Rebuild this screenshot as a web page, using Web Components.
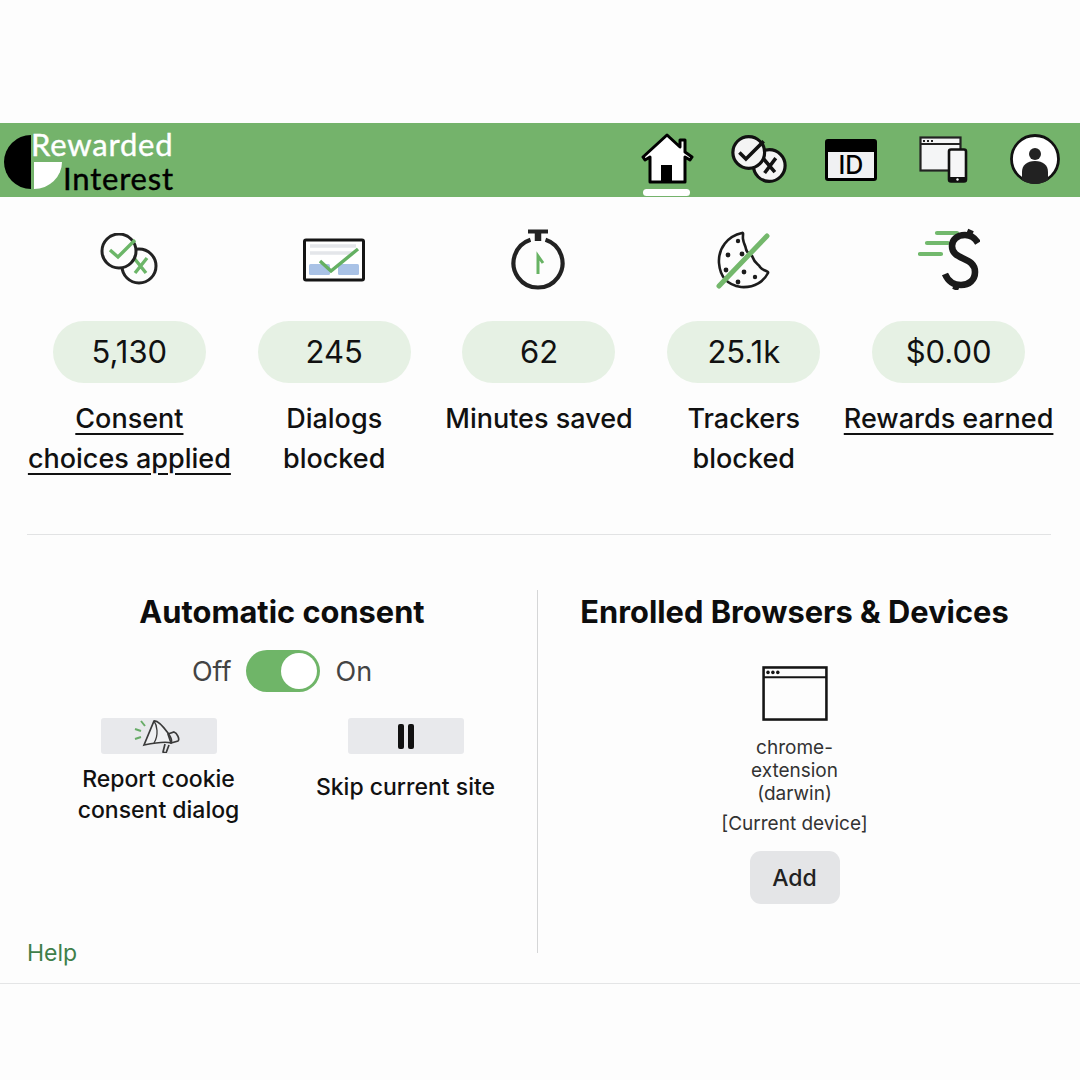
<!DOCTYPE html>
<html lang="en">
<head>
<meta charset="utf-8">
<title>Rewarded Interest</title>
<style>
  html, body { margin: 0; background: #fdfdfd; }
  body { font-family: Inter, "Liberation Sans", sans-serif; color: #111; }
</style>
</head>
<body>
<ri-app></ri-app>

<script>
const ICONS = {
  home: `<svg width="54" height="54" viewBox="0 0 54 54"><path d="M3 25 27 3l13 12V8h5v12l7 5-2 3-5-3v25H10V25l-5 3z" fill="#fff" stroke="#000" stroke-width="3" stroke-linejoin="round"/><rect x="21" y="33" width="11" height="18" fill="#000"/></svg>`,
  consent: `<svg width="60" height="52" viewBox="0 0 60 52"><circle cx="41" cy="33" r="17" fill="#f4f4f4" stroke="#111" stroke-width="3.400"/><path d="M35 26l12 14M48 25 36 41" stroke="#111" stroke-width="3.800" fill="none"/><circle cx="19" cy="19" r="17" fill="#f4f4f4" stroke="#111" stroke-width="3.400"/><path d="M9 19l7 7L35 7" stroke="#111" stroke-width="3.800" fill="none"/></svg>`,
  id: `<svg width="52" height="42" viewBox="0 0 52 42"><rect x="1.500" y="1.500" width="49" height="39" rx="1.500" fill="#f0f1f3" stroke="#000" stroke-width="3"/><rect x="1" y="1" width="50" height="12" fill="#000"/><text x="26" y="35" text-anchor="middle" font-family="Inter, sans-serif" font-size="25" font-weight="500" fill="#000">ID</text></svg>`,
  devices: `<svg width="50" height="48" viewBox="-1 0 50 48"><rect x="1.500" y="1.500" width="40" height="33" fill="#f4f5f6" stroke="#222" stroke-width="2.200"/><path d="M1.500 8h40" stroke="#222" stroke-width="2"/><path d="M4 5h2M8 5h2M12 5h2" stroke="#222" stroke-width="2"/><rect x="30" y="13.500" width="17" height="32" rx="2" fill="#f6f6f7" stroke="#111" stroke-width="2.600"/><rect x="30" y="41" width="17" height="5" fill="#111"/><circle cx="38.500" cy="43.500" r="1.200" fill="#fff"/></svg>`,
  profile: `<svg width="50" height="50" viewBox="0 0 50 50"><circle cx="25" cy="25" r="23.500" fill="#fff" stroke="#111" stroke-width="2.800"/><circle cx="25" cy="20" r="6" fill="#222"/><path d="M12 46V38c0-7 5-11 13-11s13 4 13 11v8a23 23 0 0 1-26 0z" fill="#222"/></svg>`,
  statConsent: `<svg width="60" height="54" viewBox="-2 0 60 54"><circle cx="38" cy="33" r="17" fill="#fdfdfd" stroke="#222" stroke-width="3"/><path d="M33 25l12 15M46 25 34 40" stroke="#6cb668" stroke-width="3.400" fill="none"/><circle cx="18" cy="18" r="17" fill="#fdfdfd" stroke="#222" stroke-width="3"/><path d="M9 17l8 7L34 7" stroke="#6cb668" stroke-width="3.400" fill="none"/></svg>`,
  dialog: `<svg width="62" height="44" viewBox="0 0 62 44"><rect x="1.500" y="2" width="59" height="40" rx="1.500" fill="#fff" stroke="#151515" stroke-width="3"/><path d="M7 8h46M7 15h42" stroke="#e4e6ea" stroke-width="3.500"/><rect x="6" y="26" width="21" height="11" rx="1.500" fill="#a9c2e6"/><rect x="35" y="26" width="21" height="11" rx="1.500" fill="#a9c2e6"/><path d="M17 23l11 10L55 11" stroke="#64b062" stroke-width="3.400" fill="none"/></svg>`,
  timer: `<svg width="56" height="62" viewBox="1 0 56 62"><path d="M18 2.500h20" stroke="#222" stroke-width="4"/><path d="M28 3v9" stroke="#222" stroke-width="6.500"/><path d="M20.500 10.700a24.500 24.500 0 1 0 15 0" fill="none" stroke="#222" stroke-width="4.200"/><path d="M28 45V27l5 7" fill="none" stroke="#68b364" stroke-width="3"/></svg>`,
  cookie: `<svg width="58" height="60" viewBox="0 0 58 60"><path d="M27 3c-14 3-24 15-23 30 1 13 8 22 22 24 14 1 23-6 27-14 1-2-5-2-8-6-1-3-5-3-7-9-1-5-6-3-7-9-1-5-2-4-3-10-.500-3 1-7-1-6z" fill="#fdfdfd" stroke="#1c1c1c" stroke-width="2.600"/><g fill="#1c1c1c"><circle cx="23" cy="11" r="2.200"/><circle cx="13" cy="25" r="2.400"/><circle cx="27" cy="24" r="2.400"/><circle cx="11" cy="40" r="2.400"/><circle cx="29" cy="42" r="2.400"/><circle cx="40" cy="47" r="2.200"/><circle cx="23" cy="52" r="2.400"/></g><path d="M4 56 52 6" stroke="#74b86c" stroke-width="5" stroke-linecap="round"/></svg>`,
  dollar: `<svg width="62" height="62" viewBox="0 0 62 62"><path d="M19 5h20M9 15h21M2 26h21" stroke="#72b96d" stroke-width="4.200" stroke-linecap="round"/><path d="M60 15c-3-5-8-8-13-8-8 0-13 5-13 11 0 15 23 10 23 26 0 8-6 13-14 13-7 0-13-4-16-11" fill="none" stroke="#1a1a1a" stroke-width="6.600"/><path d="M53 2l-3 7M40 55l-3 7" stroke="#1a1a1a" stroke-width="6"/></svg>`,
  megaphone: `<svg width="50" height="34" viewBox="0 0 50 34"><path d="M10 26 20 2c4-1 11 8 14 12 2 3 5 7 3 10-6-2-17 0-27 2z" fill="#eff0f2" stroke="#3a3a3a" stroke-width="1.700"/><path d="M20 2c3 4 5 14 0 22" fill="none" stroke="#3a3a3a" stroke-width="1.300"/><path d="M34 15l6-2c3 1 6 7 4 9l-7 2zM31 25l-2 8 3 1 3-8" fill="none" stroke="#3a3a3a" stroke-width="1.700"/><path d="M7 2l4 5M1 10l6 2M1 20l6-2" stroke="#68ac68" stroke-width="2"/></svg>`,
  browser: `<svg width="66" height="55" viewBox="0 0 67 56"><rect x="1.500" y="1.500" width="64" height="53" fill="#fdfdfd" stroke="#151515" stroke-width="2.600"/><path d="M1.500 11.500h64" stroke="#151515" stroke-width="2"/><g fill="#151515"><circle cx="6" cy="6.500" r="1.800"/><circle cx="11" cy="6.500" r="1.800"/><circle cx="16" cy="6.500" r="1.800"/></g></svg>`
};

// small helper so each component just declares its css and markup
class Base extends HTMLElement {
  render(css, html) {
    const root = this.attachShadow({ mode: "open" });
    root.innerHTML = `<style>${css}</style>${html}`;
  }
}

class RiLogo extends Base {
  connectedCallback() {
    this.render(`
      :host { display: block; position: relative; width: 180px; height: 74px; font-family: Lato, sans-serif; font-size: 31px; line-height: 1; letter-spacing: .8px; -webkit-text-stroke: .4px currentColor; }
      svg { position: absolute; left: 4px; top: 12px; }
      .a { position: absolute; left: 31px; top: 6px; color: #fff; }
      .b { position: absolute; left: 63px; top: 40px; color: #000; letter-spacing: .8px; }
    `, `
      <svg width="58" height="54" viewBox="0 0 58 54">
        <path d="M27 0a27 27 0 0 0 0 54z" fill="#000"/>
        <path d="M30 27h28a28 27 0 0 1-28 27z" fill="#fff"/>
      </svg>
      <span class="a">Rewarded</span><span class="b">Interest</span>`);
  }
}

class RiNavItem extends Base {
  connectedCallback() {
    const active = this.hasAttribute("active");
    this.render(`
      :host { display: block; position: relative; width: 56px; height: 74px; }
      .icon { position: absolute; inset: 0; display: flex; align-items: center; justify-content: center; }
      .bar { position: absolute; left: 4px; right: 5px; bottom: 1px; height: 7px; border-radius: 4px; background: #fff; }
    `, `<div class="icon" style="transform:translateY(${this.getAttribute("dy") || 0}px)">${ICONS[this.getAttribute("icon")]}</div>${active ? '<div class="bar"></div>' : ""}`);
  }
}

class RiHeader extends Base {
  connectedCallback() {
    this.render(`
      :host { display: flex; justify-content: space-between; height: 74px; background: #74b36b; }
      .g { display: flex; gap: 36px; margin-right: 17px; }
    `, `<ri-logo></ri-logo>
      <div class="g">
        <ri-nav-item icon="home" active dy="-1"></ri-nav-item>
        <ri-nav-item icon="consent" dy="-1"></ri-nav-item>
        <ri-nav-item icon="id" dy="0"></ri-nav-item>
        <ri-nav-item icon="devices" dy="0"></ri-nav-item>
        <ri-nav-item icon="profile" dy="-1"></ri-nav-item>
      </div>`);
  }
}

class RiStat extends Base {
  connectedCallback() {
    this.render(`
      :host { display: flex; flex-direction: column; align-items: center; text-align: center; min-width: 0; }
      .icon { height: 124px; box-sizing: border-box; display: flex; align-items: flex-start; justify-content: center; }
      .pill { width: 153px; height: 62px; box-sizing: border-box; padding-bottom: 1px; border-radius: 31px; background: #e6f1e4; display: flex; align-items: center; justify-content: center; font-size: 31px; color: #111; }
      .label { margin-top: 16px; font-size: 27px; font-weight: 500; line-height: 40px; color: #111; white-space: nowrap; }
      :host([link]) .label { text-decoration: underline; text-underline-offset: 5px; text-decoration-thickness: 2px; }
    `, `<div class="icon" style="padding-top:${this.getAttribute("top") || 26}px">${ICONS[this.getAttribute("icon")]}</div>
      <div class="pill">${this.getAttribute("value")}</div>
      <div class="label"><slot></slot></div>`);
  }
}

class RiToggle extends Base {
  connectedCallback() {
    this.render(`
      :host { display: flex; justify-content: center; align-items: center; gap: 15px; font-size: 27px; color: #444; }
      .track { width: 74px; height: 42px; border-radius: 21px; background: #6fb568; position: relative; }
      .knob { position: absolute; right: 3px; top: 3px; width: 36px; height: 36px; border-radius: 50%; background: #fff; }
    `, `<span>Off</span><div class="track"><div class="knob"></div></div><span>On</span>`);
  }
}

class RiAction extends Base {
  connectedCallback() {
    this.render(`
      :host { display: flex; flex-direction: column; align-items: center; text-align: center; }
      .btn { width: 116px; height: 36px; border-radius: 3px; background: #e8e9ec; display: flex; align-items: center; justify-content: center; }
      .label { font-size: 23px; font-weight: 500; line-height: 31px; color: #111; margin-top: var(--gap, 10px); }
      .pause { display: flex; gap: 4px; }
      .pause i { width: 6px; height: 25px; border-radius: 2px; background: #111; }
    `, `<div class="btn"></div><div class="label" style="--gap:${this.getAttribute("gap") || 10}px"><slot></slot></div>`);
    this.shadowRoot.querySelector(".btn").innerHTML = this.hasAttribute("pause")
      ? '<div class="pause"><i></i><i></i></div>'
      : ICONS[this.getAttribute("icon")];
  }
}

class RiDevice extends Base {
  connectedCallback() {
    this.render(`
      :host { display: flex; flex-direction: column; align-items: center; text-align: center; color: #333; font-size: 19px; }
      svg { display: block; }
      .name { width: 110px; line-height: 23px; margin-top: 15px; }
      .cur { margin-top: 7px; line-height: 24px; }
      .add { margin-top: 15px; width: 90px; height: 53px; border-radius: 11px; background: #e4e5e7; display: flex; align-items: center; justify-content: center; font-size: 23px; font-weight: 550; color: #222; }
    `, `${ICONS.browser}
      <div class="name">chrome-extension (darwin)</div>
      <div class="cur">[Current device]</div>
      <div class="add">Add</div>`);
  }
}

class RiApp extends Base {
  connectedCallback() {
    this.render(`
      :host { display: block; padding-top: 123px; }
      .stats { display: grid; grid-template-columns: repeat(5, minmax(0, 1fr)); margin: 0 29px 0 27px; height: 337px; }
      .rule { height: 1px; margin: 0 29px 0 27px; background: #e2e3e4; }
      .bottom { display: grid; grid-template-columns: 511px 513px; grid-template-rows: 363px; margin: 55px 29px 0 27px; }
      .left { border-right: 1px solid #d5d6d7; height: 363px; }
      h2 { margin: 0; font-size: 30.800px; font-weight: 700; line-height: 44px; text-align: center; color: #0d0d0d; }
      .left h2 { margin-bottom: 16px; }
      .actions { display: grid; grid-template-columns: 247px 247px; margin: 26px 0 0 8px; }
      .help { margin-top: 113px; font-size: 23px; color: #3f7f4a; }
      .right h2 { margin-bottom: 32px; }
      .foot { height: 1px; margin-top: 30px; background: #e4e5e6; }
    `, `
      <ri-header></ri-header>
      <section class="stats">
        <ri-stat icon="statConsent" value="5,130" top="36" link>Consent<br>choices applied</ri-stat>
        <ri-stat icon="dialog" value="245" top="41">Dialogs<br>blocked</ri-stat>
        <ri-stat icon="timer" value="62" top="32">Minutes saved</ri-stat>
        <ri-stat icon="cookie" value="25.1k" top="33">Trackers<br>blocked</ri-stat>
        <ri-stat icon="dollar" value="$0.00" top="31" link>Rewards earned</ri-stat>
      </section>
      <div class="rule"></div>
      <section class="bottom">
        <div class="left">
          <h2>Automatic consent</h2>
          <ri-toggle></ri-toggle>
          <div class="actions">
            <ri-action icon="megaphone" gap="10">Report cookie<br>consent dialog</ri-action>
            <ri-action pause gap="18">Skip current site</ri-action>
          </div>
          <div class="help">Help</div>
        </div>
        <div class="right">
          <h2>Enrolled Browsers &amp; Devices</h2>
          <ri-device></ri-device>
        </div>
      </section>
      <div class="foot"></div>`);
  }
}

customElements.define("ri-logo", RiLogo);
customElements.define("ri-nav-item", RiNavItem);
customElements.define("ri-header", RiHeader);
customElements.define("ri-stat", RiStat);
customElements.define("ri-toggle", RiToggle);
customElements.define("ri-action", RiAction);
customElements.define("ri-device", RiDevice);
customElements.define("ri-app", RiApp);
</script>
</body>
</html>
